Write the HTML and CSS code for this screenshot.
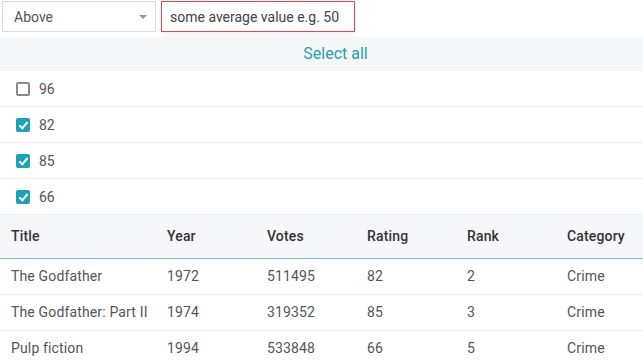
FILE: index.html
```html
<!DOCTYPE html>
<html lang="en">
    <head>
        <meta charset="UTF-8" />
        <meta name="viewport" content="width=device-width, initial-scale=1.0" />
        <title>Filter</title>
        <link rel="stylesheet" href="styles.css">
    </head>
    <body>
        <div class="filter-bar">
            <div class="select-box">
                <span>Above</span>
                <span class="caret"></span>
            </div>
            <div class="value-input">some average value e.g. 50</div>
        </div>
        <div class="select-all">Select all</div>
        <ul class="option-list">
            <li class="option"><span class="checkbox"></span>96</li>
            <li class="option"><span class="checkbox checked"></span>82</li>
            <li class="option"><span class="checkbox checked"></span>85</li>
            <li class="option"><span class="checkbox checked"></span>66</li>
        </ul>
        <table class="movies">
            <thead>
                <tr>
                    <th class="col-title">Title</th>
                    <th>Year</th>
                    <th>Votes</th>
                    <th>Rating</th>
                    <th>Rank</th>
                    <th>Category</th>
                </tr>
            </thead>
            <tbody>
                <tr>
                    <td>The Godfather</td><td>1972</td><td>511495</td><td>82</td><td>2</td><td>Crime</td>
                </tr>
                <tr>
                    <td>The Godfather: Part II</td><td>1974</td><td>319352</td><td>85</td><td>3</td><td>Crime</td>
                </tr>
                <tr>
                    <td>Pulp fiction</td><td>1994</td><td>533848</td><td>66</td><td>5</td><td>Crime</td>
                </tr>
            </tbody>
        </table>
    </body>
</html>
```
FILE: styles.css
```css
body {
    font-family: Roboto, 'Liberation Sans', sans-serif;
    font-size: 14px;
    color: #444;
    margin: 0;
    padding: 0;
    background: #fff;
    overflow: hidden;
}

.filter-bar {
    display: flex;
    gap: 5px;
    padding: 1px 2px 0;
    height: 37px;
    box-sizing: border-box;
}

.select-box {
    width: 154px;
    height: 31px;
    box-sizing: border-box;
    border: 1px solid #dcdcdc;
    display: flex;
    align-items: center;
    justify-content: space-between;
    padding: 0 8px 0 11px;
    color: #555;
}

.caret {
    width: 0;
    height: 0;
    border-left: 4px solid transparent;
    border-right: 4px solid transparent;
    border-top: 4px solid #999;
}

.value-input {
    width: 194px;
    height: 31px;
    box-sizing: border-box;
    border: 1px solid #e04a4a;
    display: flex;
    align-items: center;
    padding-left: 8px;
    color: #444;
    box-shadow: 0 3px 6px rgba(0, 0, 0, 0.06);
}

.select-all {
    background: #f6f7fa;
    color: #2a9daf;
    font-size: 16px;
    height: 34px;
    line-height: 34px;
    padding-left: 28px;
    text-align: center;
}

.option-list {
    list-style: none;
    margin: 0;
    padding: 0;
}

.option {
    height: 36px;
    display: flex;
    align-items: center;
    gap: 9px;
    padding-left: 16px;
    border-bottom: 1px solid #eceef0;
    box-sizing: border-box;
    color: #555;
}

.checkbox {
    width: 14px;
    height: 14px;
    box-sizing: border-box;
    border: 2px solid #8a8a8a;
    border-radius: 2px;
    position: relative;
}

.checkbox.checked {
    background: #1ea0b5;
    border-color: #1ea0b5;
}

.checkbox.checked::after {
    content: '';
    position: absolute;
    left: 3px;
    top: 0;
    width: 3px;
    height: 7px;
    border-right: 2px solid #fff;
    border-bottom: 2px solid #fff;
    transform: rotate(40deg);
}

.movies {
    border-collapse: collapse;
    width: 100%;
    table-layout: fixed;
    letter-spacing: 0.15px;
}

.movies th {
    background: #f6f7fa;
    font-weight: 500;
    color: #333;
    text-align: left;
    height: 43px;
    padding: 0 0 0 11px;
    border-bottom: 1px solid #6ec8bf;
    width: 100px;
    box-sizing: border-box;
}

.movies th.col-title {
    width: 156px;
}

.movies td {
    height: 36px;
    padding: 0 0 0 11px;
    color: #555;
    border-bottom: 1px solid #eceef0;
    white-space: nowrap;
    box-sizing: border-box;
}
```
